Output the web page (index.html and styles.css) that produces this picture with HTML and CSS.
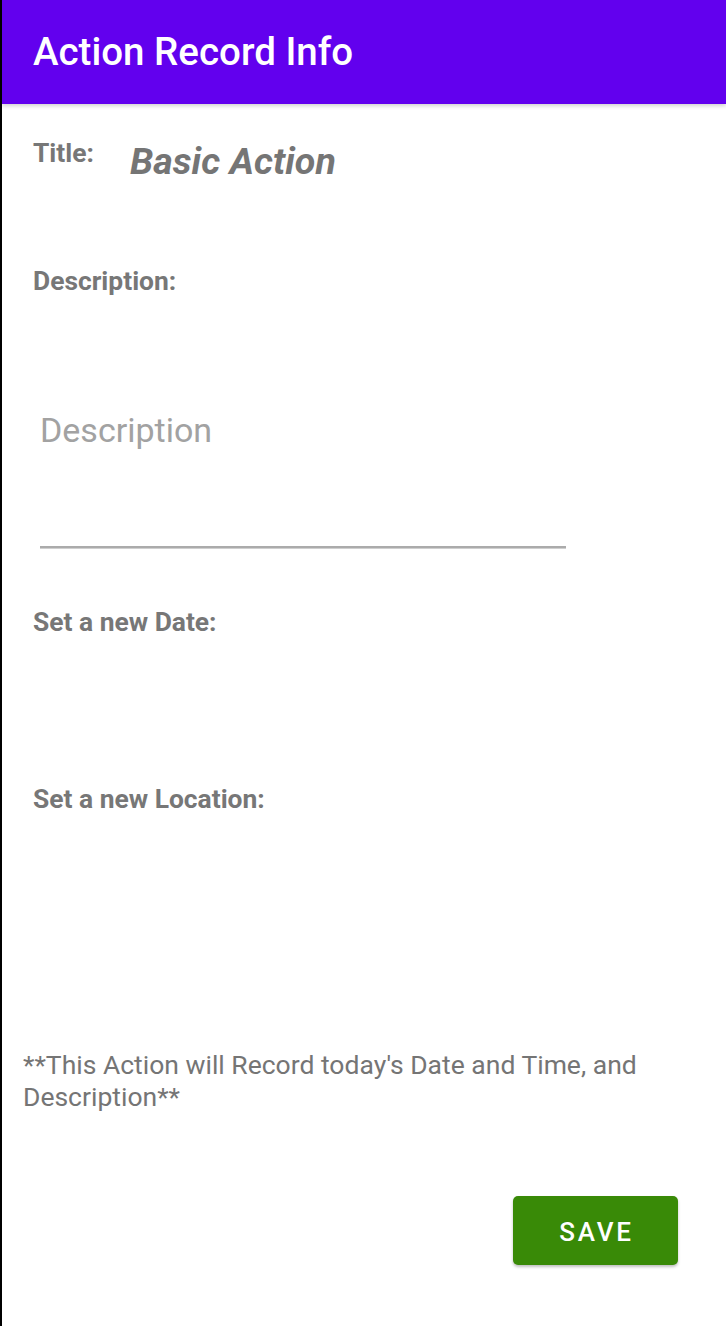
FILE: index.html
```html
<!DOCTYPE html>
<html lang="en">
<head>
<meta charset="utf-8">
<title>Action Record Info</title>
<link rel="stylesheet" href="styles.css">
</head>
<body>
<div class="screen">
  <header class="appbar">
    <h1 class="appbar-title">Action Record Info</h1>
  </header>
  <main class="content">
    <div class="title-row">
      <span class="label">Title:</span>
      <span class="title-value">Basic Action</span>
    </div>
    <div class="label label-desc">Description:</div>
    <div class="field">
      <span class="placeholder">Description</span>
    </div>
    <div class="label label-date">Set a new Date:</div>
    <div class="label label-location">Set a new Location:</div>
    <p class="note">**This Action will Record today's Date and Time, and Description**</p>
    <div class="actions">
      <button class="save-btn" type="button">SAVE</button>
    </div>
  </main>
</div>
</body>
</html>
```
FILE: styles.css
```css
html, body {
  margin: 0;
  padding: 0;
  background: #ffffff;
}

body {
  font-family: Roboto, "Liberation Sans", sans-serif;
}

.screen {
  min-height: 1326px;
  border-left: 2px solid #000000;
  box-sizing: border-box;
  background: #ffffff;
}

.appbar {
  height: 104px;
  background: #6200ee;
  display: flex;
  align-items: center;
  padding-left: 31px;
  box-shadow: 0 2px 4px rgba(0, 0, 0, 0.18);
  position: relative;
}

.appbar-title {
  margin: 0;
  color: #ffffff;
  font-size: 38.5px;
  font-weight: 500;
  line-height: 42px;
}

.content {
  display: flex;
  flex-direction: column;
  align-items: flex-start;
}

.label {
  color: #777777;
  font-size: 26.4px;
  font-weight: 700;
  line-height: 30px;
  margin-left: 31px;
}

.title-row {
  display: flex;
  align-items: flex-start;
  margin-top: 34px;
}

.title-row .label {
  width: 97px;
}

.title-value {
  margin-top: 1px;
  color: #757575;
  font-size: 37.6px;
  font-weight: 700;
  font-style: italic;
  line-height: 44px;
}

.label-desc {
  margin-top: 83px;
}

.field {
  margin-top: 114px;
  margin-left: 38px;
  width: 526px;
  padding-bottom: 96px;
  border-bottom: 2px solid #ababab;
  box-shadow: 0 1px 0 #cfcfcf;
}

.placeholder {
  display: block;
  color: #a2a2a2;
  font-size: 34px;
  line-height: 40px;
}

.label-date {
  margin-top: 59px;
}

.label-location {
  margin-top: 147px;
}

.note {
  margin: 235px 0 0 21px;
  color: #757575;
  font-size: 26.5px;
  line-height: 32px;
  max-width: 660px;
}

.actions {
  align-self: stretch;
  display: flex;
  justify-content: flex-end;
  padding-right: 48px;
  margin-top: 83px;
}

.save-btn {
  width: 165px;
  height: 69px;
  padding: 3px 0 0 2px;
  border: none;
  border-radius: 5px;
  background: #398a07;
  color: #ffffff;
  font-family: Roboto, "Liberation Sans", sans-serif;
  font-size: 26px;
  font-weight: 500;
  letter-spacing: 2.8px;
  box-shadow: 0 2px 3px rgba(0, 0, 0, 0.25);
}
```
